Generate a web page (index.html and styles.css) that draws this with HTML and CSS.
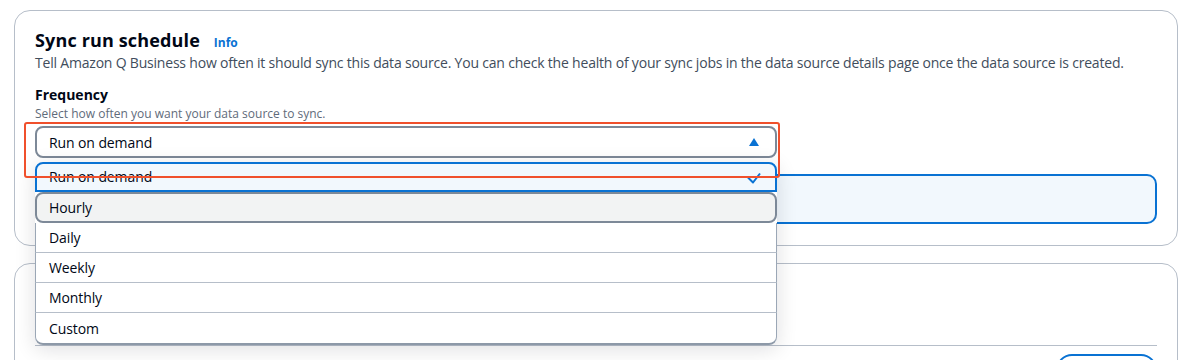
FILE: index.html
```html
<!DOCTYPE html>
<html lang="en">
<head>
  <meta charset="UTF-8">
  <title>Sync run schedule</title>
  <link rel="stylesheet" href="styles.css">
</head>
<body>
  <div class="page">
    <div class="card">
      <h2 class="card-title">Sync run schedule <a class="info-link" href="#">Info</a></h2>
      <p class="card-desc">Tell Amazon Q Business how often it should sync this data source. You can check the health of your sync jobs in the data source details page once the data source is created.</p>

      <div class="field">
        <div class="field-label">Frequency</div>
        <div class="field-hint">Select how often you want your data source to sync.</div>
        <div class="select-wrap">
          <button class="select-trigger" type="button">
            <span>Run on demand</span>
            <svg class="caret" width="16" height="16" viewBox="0 0 16 16"><path d="M3 12h10L8 4z" fill="#0972d3"/></svg>
          </button>

          <ul class="dropdown">
            <li class="option selected">
              <span>Run on demand</span>
              <svg class="check" width="16" height="16" viewBox="0 0 16 16"><polyline points="2,6.5 7,11.5 14,2.5" fill="none" stroke="#0972d3" stroke-width="2" stroke-linejoin="round"/></svg>
            </li>
            <li class="option hovered">Hourly</li>
            <li class="option">Daily</li>
            <li class="option">Weekly</li>
            <li class="option">Monthly</li>
            <li class="option last">Custom</li>
          </ul>

          <!-- annotation around the open select -->
          <div class="highlight"></div>
        </div>
      </div>

      <div class="tile"></div>
    </div>

    <div class="card card-second">
      <div class="card-body"></div>
      <div class="card-footer">
        <button class="btn-outline" type="button"></button>
      </div>
    </div>
  </div>
</body>
</html>
```

FILE: styles.css
```css
body {
  margin: 0;
  background: #ffffff;
  font-family: "Open Sans", "Noto Sans", Arial, sans-serif;
  color: #000716;
  overflow: hidden;
}

.page {
  padding: 10px 16px 0 14px;
  display: flex;
  flex-direction: column;
  gap: 17px;
}

.card {
  border: 1px solid #b6bec9;
  border-radius: 16px;
  padding: 18px 20px 21px 20px;
}

.card-title {
  margin: 0;
  font-size: 18px;
  line-height: 22px;
  font-weight: 700;
  letter-spacing: 0.15px;
}

.info-link {
  margin-left: 9px;
  font-size: 12px;
  font-weight: 700;
  color: #0972d3;
  text-decoration: none;
  letter-spacing: 0;
}

.card-desc {
  margin: -1px 0 0 0;
  font-size: 14px;
  line-height: 20px;
  color: #414d5c;
  letter-spacing: -0.2px;
}

.field {
  margin-top: 12px;
}

.field-label {
  font-size: 14px;
  line-height: 20px;
  font-weight: 700;
}

.field-hint {
  margin-top: 1px;
  font-size: 12px;
  line-height: 16px;
  color: #5f6b7a;
  letter-spacing: 0;
}

.select-wrap {
  position: relative;
  margin-top: 4px;
  width: 742px;
}

.select-trigger {
  display: flex;
  align-items: center;
  justify-content: space-between;
  width: 100%;
  height: 32px;
  padding: 0 13px 0 12px;
  border: 2px solid #7d8998;
  border-radius: 8px;
  background: #ffffff;
  font-family: inherit;
  font-size: 14px;
  color: #000716;
  letter-spacing: -0.1px;
}

.caret {
  margin-top: -1px;
}

.dropdown {
  position: absolute;
  z-index: 2;
  top: 36px;
  left: 0;
  right: 0;
  margin: 0;
  padding: 0;
  list-style: none;
  background: #ffffff;
  border-radius: 8px;
  box-shadow: 0 4px 20px 1px rgba(0, 7, 22, 0.12);
}

.option {
  display: flex;
  align-items: center;
  justify-content: space-between;
  height: 30px;
  padding: 0 13px 0 13px;
  font-size: 14px;
  letter-spacing: -0.1px;
  border-left: 1px solid #9ba7b6;
  border-right: 1px solid #9ba7b6;
  border-bottom: 1px solid #b6bec9;
  box-sizing: border-box;
}

.option.selected {
  height: 30px;
  padding: 0 12px;
  background: #f2f8fd;
  border: 2px solid #0972d3;
  border-radius: 8px 8px 0 0;
}

.option.selected span {
  margin-top: -1px;
}

.option.hovered {
  height: 31px;
  padding: 0 12px;
  background: #f2f3f3;
  border: 2px solid #7d8998;
  border-radius: 8px;
}

.option.last {
  height: 32px;
  border-bottom: 2px solid #8d99a8;
  border-radius: 0 0 8px 8px;
}

.check {
  margin-top: 4px;
  margin-right: 1px;
}

.highlight {
  position: absolute;
  z-index: 3;
  top: -4px;
  left: -11px;
  width: 752px;
  height: 52px;
  border: 2px solid #f0502c;
  border-radius: 3px;
  pointer-events: none;
}

.tile {
  margin-top: 16px;
  height: 46px;
  background: #f2f8fd;
  border: 2px solid #0972d3;
  border-radius: 10px;
}

.card-second {
  padding: 0 20px;
}

.card-body {
  height: 81px;
  border-bottom: 1px solid #b6bec9;
}

.card-footer {
  display: flex;
  justify-content: flex-end;
  padding-top: 8px;
}

.btn-outline {
  width: 101px;
  height: 32px;
  border: 2px solid #0972d3;
  border-radius: 20px;
  background: #ffffff;
}
```
